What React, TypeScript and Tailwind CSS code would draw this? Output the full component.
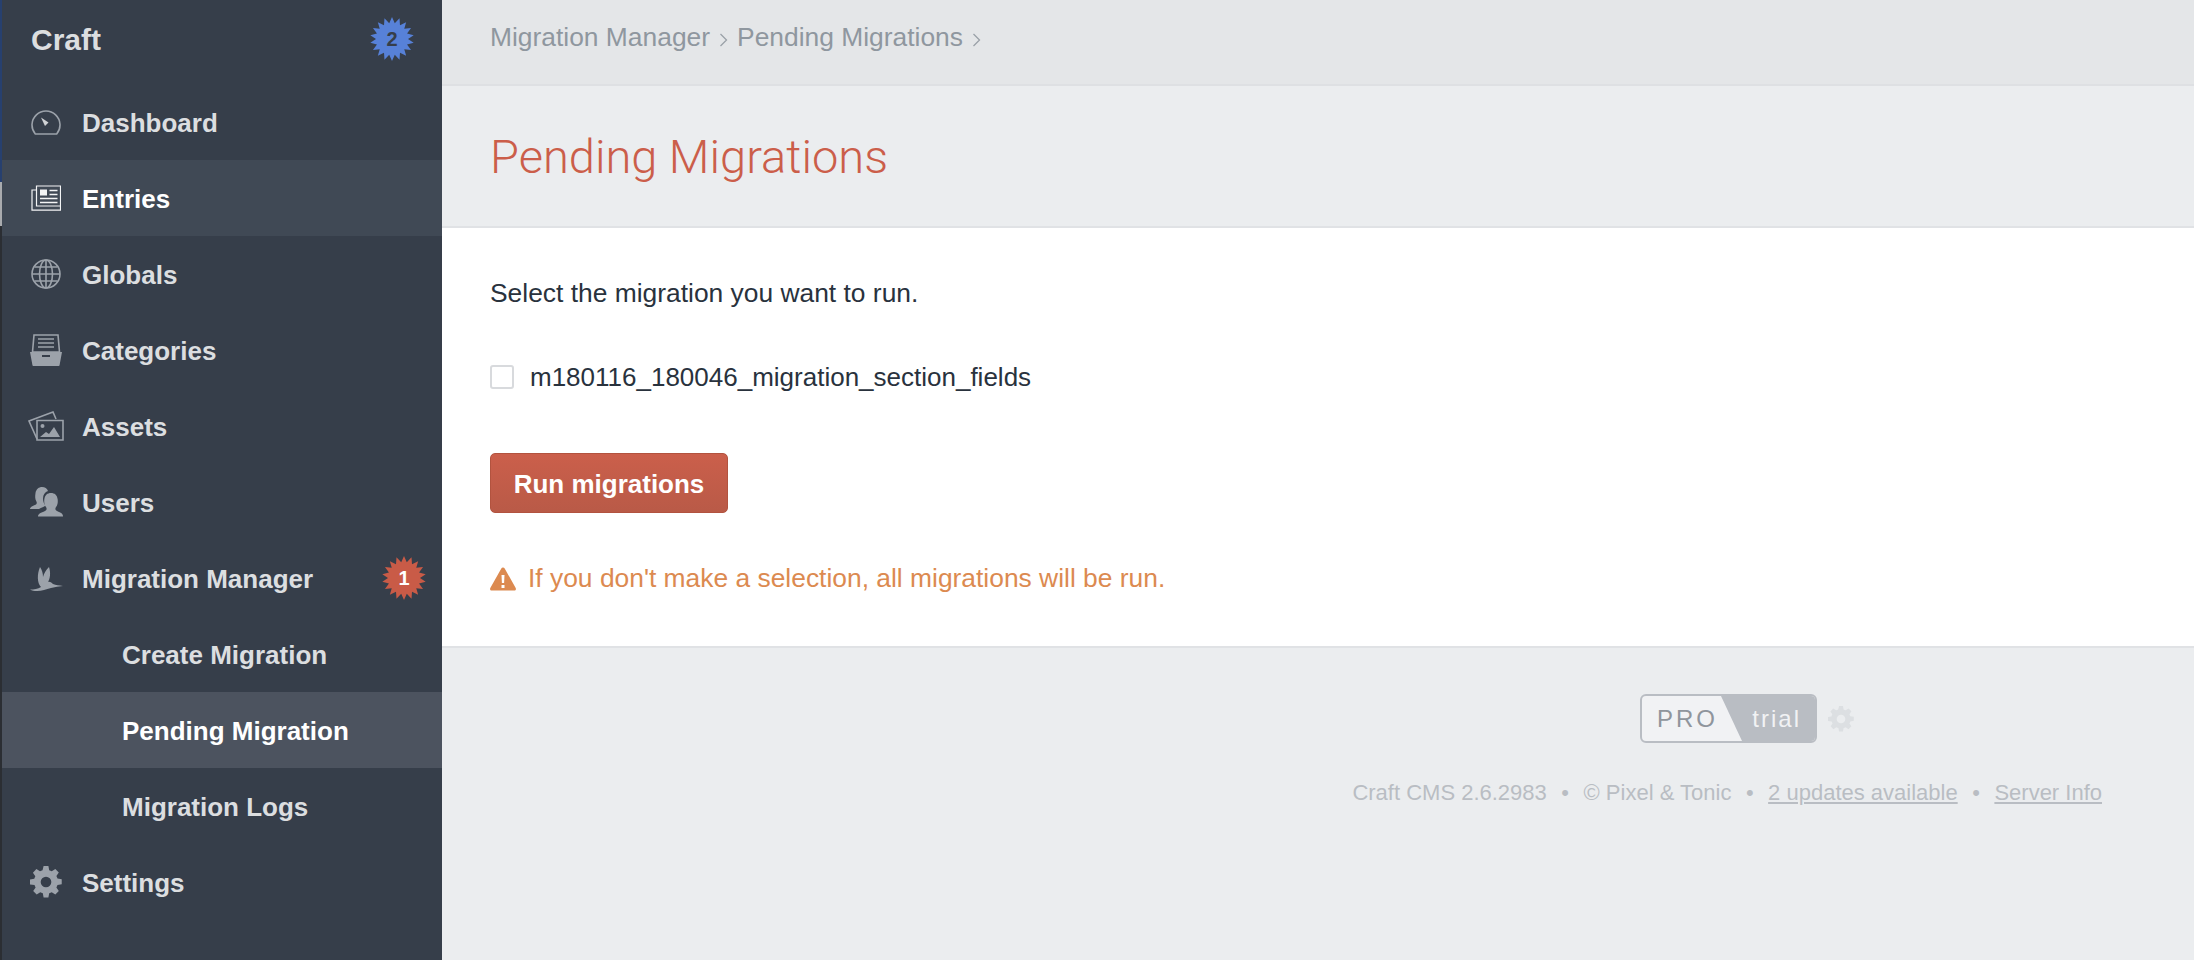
import type { ReactNode } from "react";

// starburst polygon for the nav badges
const burst = (spikes: number) => {
  const pts: string[] = [];
  for (let i = 0; i < spikes * 2; i++) {
    const r = i % 2 === 0 ? 22 : 16;
    const a = (Math.PI * i) / spikes - Math.PI / 2;
    pts.push(`${(22 + r * Math.cos(a)).toFixed(2)},${(22 + r * Math.sin(a)).toFixed(2)}`);
  }
  return pts.join(" ");
};

function Badge({ n, color, textColor }: { n: number; color: string; textColor: string }) {
  return (
    <span className="relative flex w-[44px] h-[44px] items-center justify-center">
      <svg viewBox="0 0 44 44" className="absolute inset-0 w-[44px] h-[44px]">
        <polygon points={burst(18)} fill={color} />
      </svg>
      <span className={`relative text-[20px] font-bold ${textColor}`}>{n}</span>
    </span>
  );
}

const gearPath =
  "M13.8 0l.6 3.200c.7.2 1.300.5 1.900.8l2.700-1.800 2.600 2.600-1.800 2.700c.3.600.6 1.200.8 1.900l3.200.6v3.600l-3.200.6c-.2.700-.5 1.300-.8 1.900l1.800 2.700-2.600 2.600-2.700-1.800c-.6.3-1.200.6-1.900.8l-.6 3.200h-3.600l-.6-3.200c-.7-.2-1.300-.5-1.900-.8l-2.700 1.800-2.600-2.600 1.800-2.700c-.3-.6-.6-1.200-.8-1.900L0 13.800v-3.600l3.200-.6c.2-.7.5-1.300.8-1.900L2.200 5 4.800 2.200l2.700 1.800c.6-.3 1.200-.6 1.900-.8L10.200 0zM12 8a4 4 0 1 0 0 8 4 4 0 0 0 0-8z";

const icons: Record<string, ReactNode> = {
  dashboard: (
    <svg viewBox="0 0 30 25" className="w-[30px] h-[25px]" fill="none" stroke="#9ca2aa" strokeWidth="1.6">
      <path d="M4.300 24 A14 14 0 1 1 25.700 24 Z" strokeLinejoin="round" />
      <path d="M10 7.500 L17.500 12.500 L14 16 Z" fill="#d0d2d5" stroke="none" />
    </svg>
  ),
  entries: (
    <svg viewBox="0 0 30 26" className="w-[30px] h-[26px]" fill="none" stroke="#f3f4f5" strokeWidth="1.2">
      <path d="M5.500 1h24v20H5.500z" />
      <path d="M5.500 5H1v20.200h28.500V21" />
      <rect x="9" y="4.500" width="7" height="6" fill="#f3f4f5" stroke="none" />
      <path d="M18.500 5.500h8M18.500 9.500h8M9 13.500h17.500M9 17.500h17.500" strokeWidth="1.400" />
    </svg>
  ),
  globals: (
    <svg viewBox="0 0 30 30" className="w-[30px] h-[30px]" fill="none" stroke="#9ca2aa" strokeWidth="1.600">
      <circle cx="15" cy="15" r="14" />
      <ellipse cx="15" cy="15" rx="6.500" ry="14" />
      <path d="M15 1v28M1 15h28M3.500 8h23M3.500 22h23" />
    </svg>
  ),
  categories: (
    <svg viewBox="0 0 32 32" className="w-[32px] h-[32px]">
      <path d="M4 1h24l1.500 17h-27z" fill="none" stroke="#9ca2aa" strokeWidth="1.600" />
      <path d="M8 5h16M8 9h16M8 13h16" stroke="#9ca2aa" strokeWidth="1.600" />
      <path d="M0 18h32l-2.500 13.500a1 1 0 0 1-1 .5H3.500a1 1 0 0 1-1-.5z" fill="#9ca2aa" />
      <rect x="12" y="21" width="8" height="2" fill="#363e4a" />
    </svg>
  ),
  assets: (
    <svg viewBox="0 0 36 30" className="w-[36px] h-[30px]" fill="none" stroke="#9ca2aa" strokeWidth="1.600">
      <path d="M9 28 L1 10 L25 1 L28 8" />
      <path d="M9 9.500h26v19.500H9z" />
      <circle cx="14.500" cy="15" r="2" fill="#9ca2aa" stroke="none" />
      <path d="M12 26l6-5 3 2 5-7 6 10z" fill="#9ca2aa" stroke="none" />
    </svg>
  ),
  users: (
    <svg viewBox="0 0 33 30" className="w-[33px] h-[30px]" fill="#9ca2aa">
      <path d="M0 22c0-2 3-3 6-4.500 1-.6 1-2 .3-3.200C5 12 5 9.500 5.500 6 6.200 2 9 0 12 0c3 0 5 1.500 6 4-3 1-5 3.500-5 7.500 0 3 1 5 2.300 7-1 1.500-4 2-6.300 3.500z" />
      <path d="M8 29.500c0-3 3-3.700 7-5.500 2-.9 2-2.800.8-4.300C14.500 18 14 15.500 14.300 12.500 14.800 8 17.500 6 21 6s6.200 2 6.700 6.500c.3 3-.2 5.500-1.500 7.200-1.200 1.500-1.200 3.400.8 4.300 4 1.800 6 2.500 6 5.500z" />
    </svg>
  ),
  migration: (
    <svg viewBox="0 0 33 25" className="w-[33px] h-[25px]" fill="#9ca2aa">
      <path d="M11 21C7 17 7 8 10 1c2 3 3 6 3 10 1-4 3-7 6-10 2 6 1 12-1 15 2-.5 3 .5 5 2 3 1.500 6 1 10 2-4 .5-8 1-12 2-5 1-9 3-14 3-3 0-5-.5-7-1.500 4 0 8-.5 11-2.500z" />
    </svg>
  ),
  settings: (
    <svg viewBox="0 0 24 24" className="w-[32px] h-[32px]" fill="#9ca2aa">
      <path fillRule="evenodd" d={gearPath} />
    </svg>
  ),
};

interface NavItem {
  label: string;
  icon?: string;
  sub?: boolean;
  selected?: boolean;
  active?: boolean;
  badge?: ReactNode;
}

const nav: NavItem[] = [
  { label: "Dashboard", icon: "dashboard" },
  { label: "Entries", icon: "entries", selected: true },
  { label: "Globals", icon: "globals" },
  { label: "Categories", icon: "categories" },
  { label: "Assets", icon: "assets" },
  { label: "Users", icon: "users" },
  {
    label: "Migration Manager",
    icon: "migration",
    badge: <Badge n={1} color="#c95b47" textColor="text-white" />,
  },
  { label: "Create Migration", sub: true },
  { label: "Pending Migration", sub: true, active: true },
  { label: "Migration Logs", sub: true },
  { label: "Settings", icon: "settings" },
];

function NavRow({ item }: { item: NavItem }) {
  const bg = item.active ? "bg-[#4c535f]" : item.selected ? "bg-[#404955]" : "";
  const color = item.active || item.selected ? "text-white" : "text-[#dcdee0]";
  return (
    <div className={`flex h-[76px] items-center text-[26px] font-bold ${bg} ${color}`}>
      {item.sub ? (
        <span className="pl-[120px] pt-[2px]">{item.label}</span>
      ) : (
        <>
          <span className="flex w-[80px] shrink-0 items-center justify-center pl-[22px] pr-[14px]">
            {item.icon && icons[item.icon]}
          </span>
          <span className="flex-1 pt-[2px]">{item.label}</span>
          {item.badge && <span className="pr-[16px]">{item.badge}</span>}
        </>
      )}
    </div>
  );
}

function Chevron() {
  return (
    <svg viewBox="0 0 9 14" className="mt-[4px] h-[14px] w-[9px]" fill="none" stroke="#9aa1a8" strokeWidth="1.300">
      <path d="M1.500 1l6 6-6 6" />
    </svg>
  );
}

export default function App() {
  return (
    <div className="flex h-[960px] w-[2194px] overflow-hidden font-['Liberation_Sans',sans-serif] bg-[#ebedef]">
      <div className="flex w-[2px] shrink-0 flex-col">
        <div className="h-[182px] bg-[#27406f]" />
        <div className="h-[44px] bg-[#a9abae]" />
        <div className="flex-1 bg-[#2b2e33]" />
      </div>
      <aside className="w-[440px] shrink-0 bg-[#363e4a]">
        <div className="flex h-[84px] items-center justify-between pb-[6px] pl-[29px] pr-[28px]">
          <span className="text-[30px] font-bold text-[#dcdee0]">Craft</span>
          <Badge n={2} color="#5781d8" textColor="text-[#363e4a]" />
        </div>
        {nav.map((item) => (
          <NavRow key={item.label} item={item} />
        ))}
      </aside>

      <main className="flex-1 min-w-0">
        <div className="flex h-[86px] items-center gap-[9px] border-b-2 border-[#dee0e3] bg-[#e4e6e8] pb-[8px] pl-[48px] text-[26.4px] text-[#8f979f]">
          <span>Migration Manager</span>
          <Chevron />
          <span>Pending Migrations</span>
          <Chevron />
        </div>
        <div className="flex h-[142px] items-center border-b-2 border-[#e0e2e5] pl-[48px] pt-[2px]">
          <h1 className="font-['Roboto',sans-serif] text-[47px] font-light text-[#cb5e4a]">Pending Migrations</h1>
        </div>
        <div className="h-[420px] border-b-2 border-[#e0e2e5] bg-white pl-[48px] pt-[49px] text-[26.4px] text-[#29323d]">
          <p className="leading-[32px]">Select the migration you want to run.</p>
          <label className="mt-[52px] flex h-[32px] items-center gap-[16px]">
            <span className="h-[24px] w-[24px] rounded-[3px] border-2 border-[#d8dadd] bg-white" />
            <span className="text-[26px]">m180116_180046_migration_section_fields</span>
          </label>
          <button className="mt-[60px] block h-[60px] w-[238px] rounded-[5px] border border-[#b2533f] bg-gradient-to-b from-[#cb5f4b] to-[#b95a47] pt-[3px] text-[26px] font-bold text-white">
            Run migrations
          </button>
          <div className="mt-[50px] flex h-[32px] items-center gap-[12px] text-[#dc8a50]">
            <svg viewBox="0 0 26 23" className="h-[24px] w-[26px]" fill="#dc8a50">
              <path
                fillRule="evenodd"
                d="M13 0c.8 0 1.300.4 1.700 1l11 19.500c.6 1.200-.1 2.500-1.500 2.500H1.800C.4 23-.3 21.700.3 20.500l11-19.500C11.700.4 12.200 0 13 0zM11.500 7.500l.4 8h2.200l.4-8zM11.500 17.500v3h3v-3z"
              />
            </svg>
            <span>If you don't make a selection, all migrations will be run.</span>
          </div>
        </div>
        <footer className="flex justify-end pr-[92px] pt-[46px]">
          <div className="flex flex-col items-end">
            <div className="mr-[248px] flex items-center gap-[11px]">
              <div className="flex h-[49px] w-[177px] overflow-hidden rounded-[6px] border-2 border-[#b9bdc3] bg-[#f1f2f4]">
                <span className="flex w-[79px] shrink-0 items-center pl-[15px] text-[24px] tracking-[3px] text-[#8f959c]">PRO</span>
                <span className="flex flex-1 items-center justify-end bg-[#b9bdc3] pr-[14px] text-[24px] tracking-[2px] text-[#f1f2f4] [clip-path:polygon(0_0,100%_0,100%_100%,21px_100%)]">
                  trial
                </span>
              </div>
              <svg viewBox="0 0 24 24" className="h-[26px] w-[26px]" fill="#dcdfe2">
                <path fillRule="evenodd" d={gearPath} />
              </svg>
            </div>
            <div className="mt-[33px] flex items-center gap-[14.5px] text-[22px] text-[#b9bdc3]">
              <span>Craft CMS 2.6.2983</span>
              <span>•</span>
              <span>© Pixel &amp; Tonic</span>
              <span>•</span>
              <a className="underline">2 updates available</a>
              <span>•</span>
              <a className="underline">Server Info</a>
            </div>
          </div>
        </footer>
      </main>
    </div>
  );
}
